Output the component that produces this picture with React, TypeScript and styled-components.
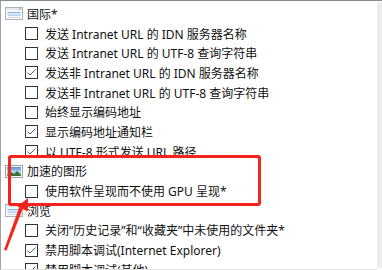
import styled, { createGlobalStyle } from "styled-components";

const GlobalStyle = createGlobalStyle`
  html, body {
    margin: 0;
    padding: 0;
    background: #fff;
  }
`;

const Frame = styled.div`
  position: relative;
  width: 382px;
  height: 270px;
  display: flex;
  box-sizing: border-box;
  border-top: 1px solid #868b92;
  background: #fff;
  overflow: hidden;
  font-family: "Noto Sans", "Noto Sans CJK SC", sans-serif;
  font-size: 12px;
  color: #111;
`;

const Pane = styled.div`
  flex: 1;
  border-left: 1px solid #a3a3a3;
  border-bottom: 1px solid #e3e3e3;
  padding-top: 3px;
  overflow: hidden;
`;

const Track = styled.div`
  width: 5px;
  margin: 1px 0 2px 0;
  background: #ededed;
`;

const Heading = styled.div`
  display: flex;
  align-items: center;
  gap: 4px;
  height: 19.7px;
  padding-left: 4px;
  white-space: nowrap;
`;

const Option = styled.div`
  display: flex;
  align-items: center;
  gap: 7px;
  height: 19.7px;
  padding-left: 24px;
  white-space: nowrap;
`;

const Box = styled.span`
  flex: none;
  width: 13px;
  height: 13px;
  box-sizing: border-box;
  border: 1px solid #333;
  background: #fff;
  display: flex;
  align-items: center;
  justify-content: center;
`;

const Highlight = styled.div`
  position: absolute;
  left: 8px;
  top: 154px;
  width: 253px;
  height: 51px;
  box-sizing: border-box;
  border: 3px solid #f5231b;
  border-radius: 3px;
  pointer-events: none;
`;

const Arrow = styled.svg`
  position: absolute;
  left: 0;
  top: 190px;
  pointer-events: none;
`;

function ListIcon() {
  return (
    <svg width="18" height="13" viewBox="0 0 18 13">
      <rect x="0.5" y="0.5" width="17" height="12" fill="#fbfbfb" stroke="#a9b2bd" />
      <rect x="1" y="1" width="16" height="2" fill="#e4e8ee" />
      <rect x="14" y="1.5" width="2" height="1" fill="#8aa2c0" />
      <rect x="2.5" y="5" width="13" height="1.2" fill="#7fb3e6" />
      <rect x="2.5" y="7.5" width="13" height="1.2" fill="#9cc5ee" />
      <rect x="2.5" y="10" width="13" height="1" fill="#c7dcf2" />
    </svg>
  );
}

function PictureIcon() {
  return (
    <svg width="18" height="13" viewBox="0 0 18 13">
      <defs>
        <linearGradient id="sky" x1="0" y1="0" x2="0" y2="1">
          <stop offset="0" stopColor="#4f8fd0" />
          <stop offset="0.55" stopColor="#bcd9f0" />
          <stop offset="1" stopColor="#5aa35a" />
        </linearGradient>
      </defs>
      <rect x="0.5" y="0.5" width="17" height="12" fill="#fff" stroke="#9aa3ad" />
      <rect x="2" y="2" width="14" height="9" fill="url(#sky)" />
      <path d="M2 11 L6 7 L9 9 L12 6 L16 10 L16 11 Z" fill="#3c6e3c" />
    </svg>
  );
}

function Check({ checked }: { checked?: boolean }) {
  return (
    <Box>
      {checked && (
        <svg width="11" height="11" viewBox="0 0 11 11">
          <path d="M1.5 5.5 L4 8 L9.5 2.5" fill="none" stroke="#5a5a5a" strokeWidth="1" />
        </svg>
      )}
    </Box>
  );
}

type Item = { kind: "head"; icon: "list" | "picture"; label: string } | { kind: "opt"; label: string; checked?: boolean };

const items: Item[] = [
  { kind: "head", icon: "list", label: "国际*" },
  { kind: "opt", label: "发送 Intranet URL 的 IDN 服务器名称" },
  { kind: "opt", label: "发送 Intranet URL 的 UTF-8 查询字符串" },
  { kind: "opt", label: "发送非 Intranet URL 的 IDN 服务器名称", checked: true },
  { kind: "opt", label: "发送非 Intranet URL 的 UTF-8 查询字符串" },
  { kind: "opt", label: "始终显示编码地址" },
  { kind: "opt", label: "显示编码地址通知栏", checked: true },
  { kind: "opt", label: "以 UTF-8 形式发送 URL 路径", checked: true },
  { kind: "head", icon: "picture", label: "加速的图形" },
  { kind: "opt", label: "使用软件呈现而不使用 GPU 呈现*" },
  { kind: "head", icon: "list", label: "浏览" },
  { kind: "opt", label: "关闭“历史记录”和“收藏夹”中未使用的文件夹*" },
  { kind: "opt", label: "禁用脚本调试(Internet Explorer)", checked: true },
  { kind: "opt", label: "禁用脚本调试(其他)", checked: true },
];

function App() {
  return (
    <>
      <GlobalStyle />
      <Frame>
        <Pane>
          {items.map((it, i) =>
            it.kind === "head" ? (
              <Heading key={i}>
                {it.icon === "list" ? <ListIcon /> : <PictureIcon />}
                <span>{it.label}</span>
              </Heading>
            ) : (
              <Option key={i}>
                <Check checked={it.checked} />
                <span>{it.label}</span>
              </Option>
            )
          )}
        </Pane>
        <Track />
        <Highlight />
        <Arrow width="40" height="65" viewBox="0 0 40 65">
          <polygon points="4,59 6.5,59.5 23,17 19.5,15.5" fill="#f5231b" />
          <polygon points="28,7 27.8,20.5 17.5,15.5" fill="#f5231b" />
        </Arrow>
      </Frame>
    </>
  );
}

export default App;
